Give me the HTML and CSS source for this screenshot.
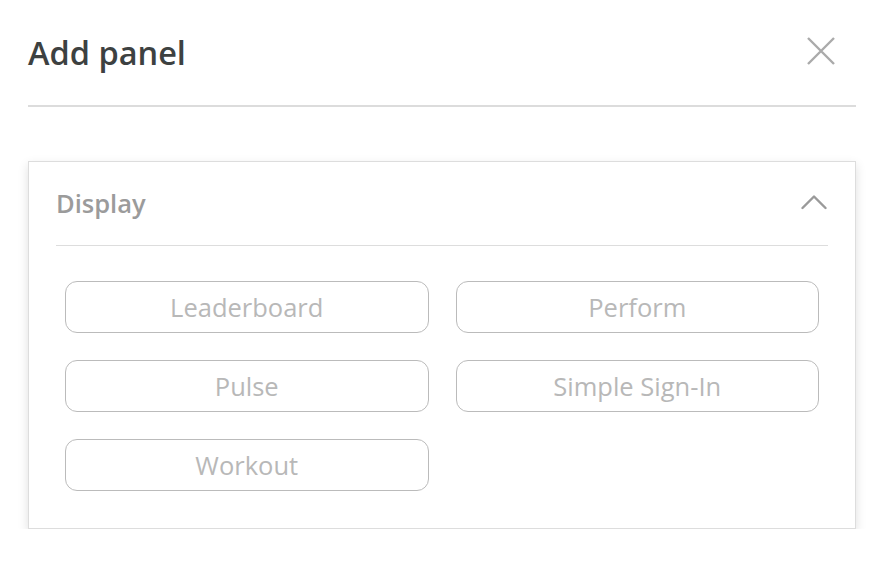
FILE: index.html
```html
<!DOCTYPE html>
<html>
<head>
<meta charset="utf-8">
<link rel="stylesheet" href="styles.css">
</head>
<body>
<div class="modal">
  <div class="header">
    <h1 class="title">Add panel</h1>
    <button class="close" aria-label="Close">
      <svg width="28" height="28" viewBox="0 0 28 28"><path d="M1 1 L27 27 M27 1 L1 27" stroke="#aaaaaa" stroke-width="2.4" fill="none"/></svg>
    </button>
  </div>
  <div class="card">
    <div class="card-head">
      <span class="card-title">Display</span>
      <svg class="chev" width="26" height="16" viewBox="0 0 26 16"><path d="M1.5 14 L13 2.5 L24.5 14" stroke="#9a9a9a" stroke-width="2.4" fill="none" stroke-linecap="round" stroke-linejoin="round"/></svg>
    </div>
    <div class="grid">
      <button class="opt">Leaderboard</button>
      <button class="opt">Perform</button>
      <button class="opt">Pulse</button>
      <button class="opt">Simple Sign-In</button>
      <button class="opt">Workout</button>
    </div>
  </div>
</div>
</body>
</html>
```
FILE: styles.css
```css
html, body {
  margin: 0;
  padding: 0;
  background: #ffffff;
  font-family: "Open Sans", "Noto Sans", sans-serif;
}
.modal {
  padding: 0 34px 0 28px;
}
.header {
  height: 105px;
  display: flex;
  align-items: center;
  justify-content: space-between;
  border-bottom: 2px solid #dcdcdc;
}
.title {
  margin: 0;
  font-size: 32.5px;
  font-weight: 600;
  color: #3d4141;
  letter-spacing: 0;
}
.close {
  background: none;
  border: 0;
  padding: 0;
  margin-right: 21px;
  display: flex;
  margin-top: -4px;
}
.card {
  margin-top: 54px;
  border: 1px solid #dddddd;
  padding: 0 27px;
  box-shadow: 0 4px 10px rgba(0, 0, 0, 0.13);
}
.card-head {
  height: 83px;
  display: flex;
  align-items: center;
  justify-content: space-between;
  border-bottom: 1px solid #dddddd;
}
.card-title {
  font-size: 25.5px;
  font-weight: 600;
  color: #9b9b9b;
  margin-left: 0;
  margin-top: -2px;
}
.chev {
  margin-right: 1px;
  margin-top: -4px;
}
.grid {
  display: grid;
  grid-template-columns: 1fr 1fr;
  gap: 27px;
  padding: 35px 9px 37px;
}
.opt {
  height: 52px;
  border: 1px solid #bbbbbb;
  border-radius: 12px;
  background: #ffffff;
  font-family: "Open Sans", "Noto Sans", sans-serif;
  font-size: 25.5px;
  color: #b8b8b8;
  padding: 0;
}
```
